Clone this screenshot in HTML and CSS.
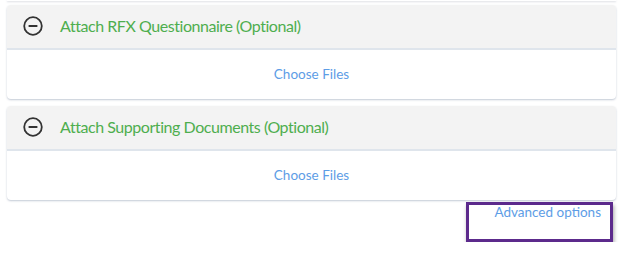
FILE: index.html
```html
<!DOCTYPE html>
<html lang="en">
<head>
    <meta charset="UTF-8">
    <meta name="viewport" content="width=device-width, initial-scale=1.0">
    <title>Attachments</title>
    <link rel="stylesheet" href="styles.css">
</head>
<body>
    <div class="page">
        <div class="prev-card"></div>

        <div class="card">
            <div class="card-header">
                <svg class="toggle" width="20" height="20" viewBox="0 0 20 20">
                    <circle cx="10" cy="10" r="8.8" fill="none" stroke="#333" stroke-width="1.8"/>
                    <line x1="5.6" y1="10" x2="14.4" y2="10" stroke="#333" stroke-width="2"/>
                </svg>
                <span class="title">Attach RFX Questionnaire (Optional)</span>
            </div>
            <div class="card-body">
                <a href="#" class="choose">Choose Files</a>
            </div>
        </div>

        <div class="card">
            <div class="card-header">
                <svg class="toggle" width="20" height="20" viewBox="0 0 20 20">
                    <circle cx="10" cy="10" r="8.8" fill="none" stroke="#333" stroke-width="1.8"/>
                    <line x1="5.6" y1="10" x2="14.4" y2="10" stroke="#333" stroke-width="2"/>
                </svg>
                <span class="title">Attach Supporting Documents (Optional)</span>
            </div>
            <div class="card-body">
                <a href="#" class="choose">Choose Files</a>
            </div>
        </div>

        <div class="advanced-row">
            <div class="advanced-box">
                <a href="#" class="advanced">Advanced options</a>
            </div>
        </div>
    </div>
</body>
</html>
```

FILE: styles.css
```css
body {
    margin: 0;
    padding: 0;
    background-color: #fff;
    font-family: Lato, "Open Sans", sans-serif;
}

.page {
    width: 609px;
    margin-left: 7px;
}

.prev-card {
    height: 1px;
    background-color: #fff;
    box-shadow: 0 1px 2px rgba(120, 130, 150, 0.35);
}

.card {
    margin-top: 4px;
    margin-bottom: 7px;
    background-color: #fff;
    border-radius: 4px;
    box-shadow: 0 1px 2px rgba(120, 135, 160, 0.45);
    overflow: hidden;
}

.card + .card {
    margin-top: 0;
}

.card-header {
    display: flex;
    align-items: center;
    height: 41px;
    padding-left: 16px;
    padding-bottom: 2px;
    background-color: #f3f3f3;
    border-bottom: 2px solid #dfe5ec;
}

.toggle {
    flex: none;
}

.title {
    margin-left: 17px;
    font-size: 16px;
    letter-spacing: -0.45px;
    color: #4eae4e;
}

.card-body {
    display: flex;
    justify-content: center;
    align-items: center;
    height: 47px;
    padding-bottom: 2px;
}

.choose {
    font-size: 13.5px;
    color: #5d9de6;
    text-decoration: none;
}

.advanced-row {
    display: flex;
    justify-content: flex-end;
    margin-top: -5px;
    margin-right: 3px;
}

.advanced-box {
    width: 141px;
    height: 34px;
    border: 3px solid #5c2a8c;
    box-shadow: 1px 3px 4px rgba(0, 0, 0, 0.35);
    text-align: right;
    line-height: 12px;
}

.advanced {
    margin-right: 9px;
    font-size: 13.5px;
    color: #5d9de6;
    text-decoration: none;
}
```
